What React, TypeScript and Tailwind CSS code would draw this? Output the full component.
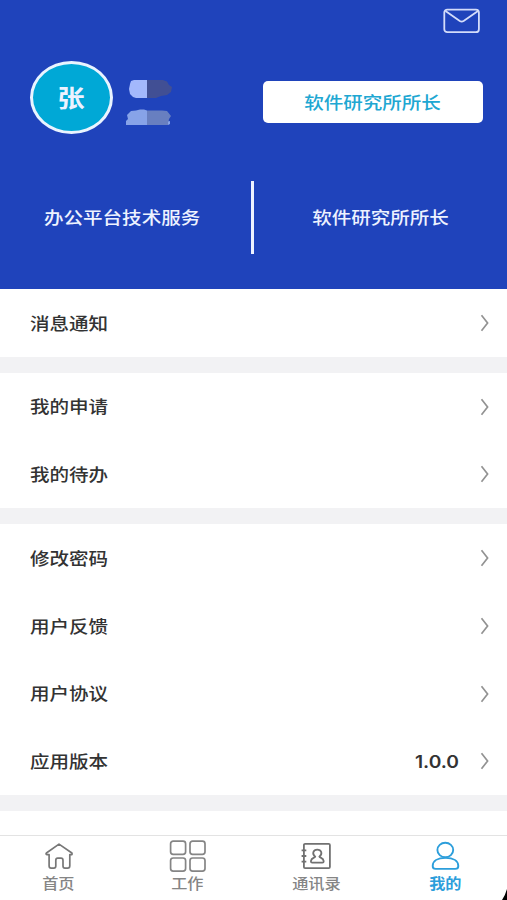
import type { ReactNode } from "react";

interface MenuItem {
  label: string;
  value?: string;
}

const menuGroups: MenuItem[][] = [
  [{ label: "消息通知" }],
  [{ label: "我的申请" }, { label: "我的待办" }],
  [
    { label: "修改密码" },
    { label: "用户反馈" },
    { label: "用户协议" },
    { label: "应用版本", value: "1.0.0" },
  ],
];

function MailIcon() {
  return (
    <svg className="h-[26px] w-[38px]" viewBox="0 0 38 26" fill="none" stroke="#d3dcfa" strokeWidth="1.8">
      <rect x="1.3" y="1.6" width="34.6" height="22.6" rx="3" />
      <path d="M2.5 3 L16.8 13 Q18.7 14.2 20.6 13 L35 3" />
    </svg>
  );
}

function HiddenName() {
  return (
    <svg className="h-[50px] w-[50px]" viewBox="0 0 50 50">
      <path d="M22 1H9L6 2 5 5 4 10 5 15 8 18 11 19H22Z" fill="#a3b8fc" />
      <path d="M22 1H38L42 2.5 44 6 47 8 46 13 42 16 36 17 31 19H22Z" fill="#414f94" />
      <path d="M22 31.5L19 30.5H15L11 31.5 6 32 2 36 3 40 1 42V46H22Z" fill="#87a3e8" />
      <path d="M22 31.5H37L42 32 46 37 44 40 43 46H22Z" fill="#687fc0" />
      <path d="M43 42.5L45 42V45L43 46Z" fill="#87a3e8" />
    </svg>
  );
}

function ChevronIcon() {
  return (
    <svg className="h-[18px] w-[10px]" viewBox="0 0 10 18" fill="none" stroke="#929292" strokeWidth="1.7">
      <path d="M1.5 1.2 L7.6 9 L1.5 16.8" />
    </svg>
  );
}

function HomeIcon() {
  return (
    <svg className="h-[34px] w-[40px]" viewBox="0 0 40 34" fill="none" stroke="#777" strokeWidth="1.7" strokeLinejoin="round">
      <path d="M20 5.1 L32.9 14 Q33.5 15.7 32.1 15.7 H30.8 V26.8 Q30.8 29.2 28.6 29.2 H25.9 Q24 29.2 24 27 V21.5 Q24 19.2 22 19.2 H18.7 Q16.8 19.2 16.8 21.5 V27 Q16.8 29.2 14.8 29.2 H12.2 Q10.1 29.2 10.1 26.8 V15.7 H8 Q6.4 15.3 7.4 14 Z" />
    </svg>
  );
}

function GridIcon() {
  return (
    <svg className="h-[34px] w-[40px]" viewBox="0 0 40 34" fill="none" stroke="#858585" strokeWidth="1.7">
      <rect x="2.6" y="2.1" width="15" height="13.2" rx="2.6" />
      <rect x="22" y="2.1" width="15" height="13.2" rx="2.6" />
      <rect x="2.6" y="19" width="15" height="13.2" rx="2.6" />
      <rect x="22" y="19" width="15" height="13.2" rx="2.6" />
    </svg>
  );
}

function ContactsIcon() {
  return (
    <svg className="h-[34px] w-[40px]" viewBox="0 0 40 34" fill="none" stroke="#717171" strokeWidth="1.8">
      <rect x="6.9" y="4.9" width="26" height="24.3" rx="1.2" />
      <path d="M4.6 11.3H9.3 M4.6 17H9.3 M4.6 22.7H9.3" />
      <path d="M18.2 17.6 C14.6 14.8 16.3 10.6 20.3 10.6 C24.3 10.6 26 14.8 22.4 17.6 C22.6 18.8 26.4 18.8 26.7 22.2 Q26.7 23.7 25.4 23.7 H15.2 Q13.9 23.7 13.9 22.2 C14.2 18.8 18 18.8 18.2 17.6Z" />
    </svg>
  );
}

function UserIcon() {
  return (
    <svg className="h-[34px] w-[40px]" viewBox="0 0 40 34" fill="none" stroke="#2c9edb" strokeWidth="1.9">
      <ellipse cx="19.3" cy="11" rx="7.9" ry="7.3" />
      <path d="M6.7 27 C6.7 21.8 11.7 18.9 19.5 18.9 C27.3 18.9 32.3 21.8 32.3 27 Q32.3 29.9 29.3 29.9 H9.7 Q6.7 29.9 6.7 27Z" />
    </svg>
  );
}

const tabs: { label: string; icon: ReactNode; active?: boolean }[] = [
  { label: "首页", icon: <HomeIcon /> },
  { label: "工作", icon: <GridIcon /> },
  { label: "通讯录", icon: <ContactsIcon /> },
  { label: "我的", icon: <UserIcon />, active: true },
];

export default function App() {
  return (
    <div className="relative flex h-[900px] w-[507px] flex-col overflow-hidden bg-white font-['Noto_Sans_CJK_SC',sans-serif] font-medium">
      {/* Profile header */}
      <header className="flex h-[289px] shrink-0 flex-col bg-[#1f43bb] text-[#edf2ff]">
        <div className="flex h-[60px] justify-end pt-2 pr-[26px]">
          <MailIcon />
        </div>
        <div className="flex h-[74px] items-center pl-[30px]">
          <div className="flex h-[73px] w-[83px] items-center justify-center rounded-[50%] border-3 border-[#e9f4ff] bg-[#00a8d6] pr-0.5">
            <span className="scale-x-[1.13] text-[24px] leading-none font-bold">张</span>
          </div>
          <div className="mt-[13px] ml-3">
            <HiddenName />
          </div>
          <div className="mt-[9px] ml-[88px] flex h-[42px] w-[220px] items-center justify-center rounded-[5px] bg-white pr-0.5 text-[#20a7d2]">
            <span className="scale-x-[1.13] text-[17.3px] leading-none">软件研究所所长</span>
          </div>
        </div>
        <div className="mt-[46px] flex h-[74px] items-center text-[17.3px] leading-none">
          <div className="flex w-[251px] justify-center pr-1.5 pb-px">
            <span className="scale-x-[1.13]">办公平台技术服务</span>
          </div>
          <div className="h-[73px] w-[2.5px] bg-[#edf2ff]" />
          <div className="flex flex-1 justify-center pb-px">
            <span className="scale-x-[1.13]">软件研究所所长</span>
          </div>
        </div>
      </header>

      {/* Settings list */}
      <main className="flex-1">
        {menuGroups.map((group) => (
          <section key={group[0].label} className="border-b-16 border-[#f2f2f4]">
            {group.map((item) => (
              <div key={item.label} className="flex h-[67.75px] items-center pr-[17px] pl-[30px] text-[17.3px] leading-none text-[#333]">
                <span className="mb-px origin-left scale-x-[1.13]">{item.label}</span>
                <span className="mt-[3px] mr-[21px] ml-auto origin-right scale-x-[1.13] font-[Inter,sans-serif] text-[17px] font-semibold">
                  {item.value}
                </span>
                <ChevronIcon />
              </div>
            ))}
          </section>
        ))}
      </main>

      {/* Bottom tabs */}
      <nav className="flex h-[65px] shrink-0 border-t border-[#e3e3e3]">
        <div className="-ml-1.5 flex w-[516px] shrink-0">
          {tabs.map((tab) => (
            <div
              key={tab.label}
              className={`flex w-[129px] flex-col items-center pt-[3px] ${tab.active ? "font-bold text-[#2c9edb]" : "text-[#858585]"}`}
            >
              {tab.icon}
              <span className="mt-0.5 scale-x-[1.13] text-[14.3px] leading-4">{tab.label}</span>
            </div>
          ))}
        </div>
      </nav>

      <svg className="absolute right-0 bottom-0 h-[11px] w-[5px]" viewBox="0 0 5 11">
        <path d="M5 0V11H0Q3 7 5 0Z" fill="#000" />
      </svg>
    </div>
  );
}
